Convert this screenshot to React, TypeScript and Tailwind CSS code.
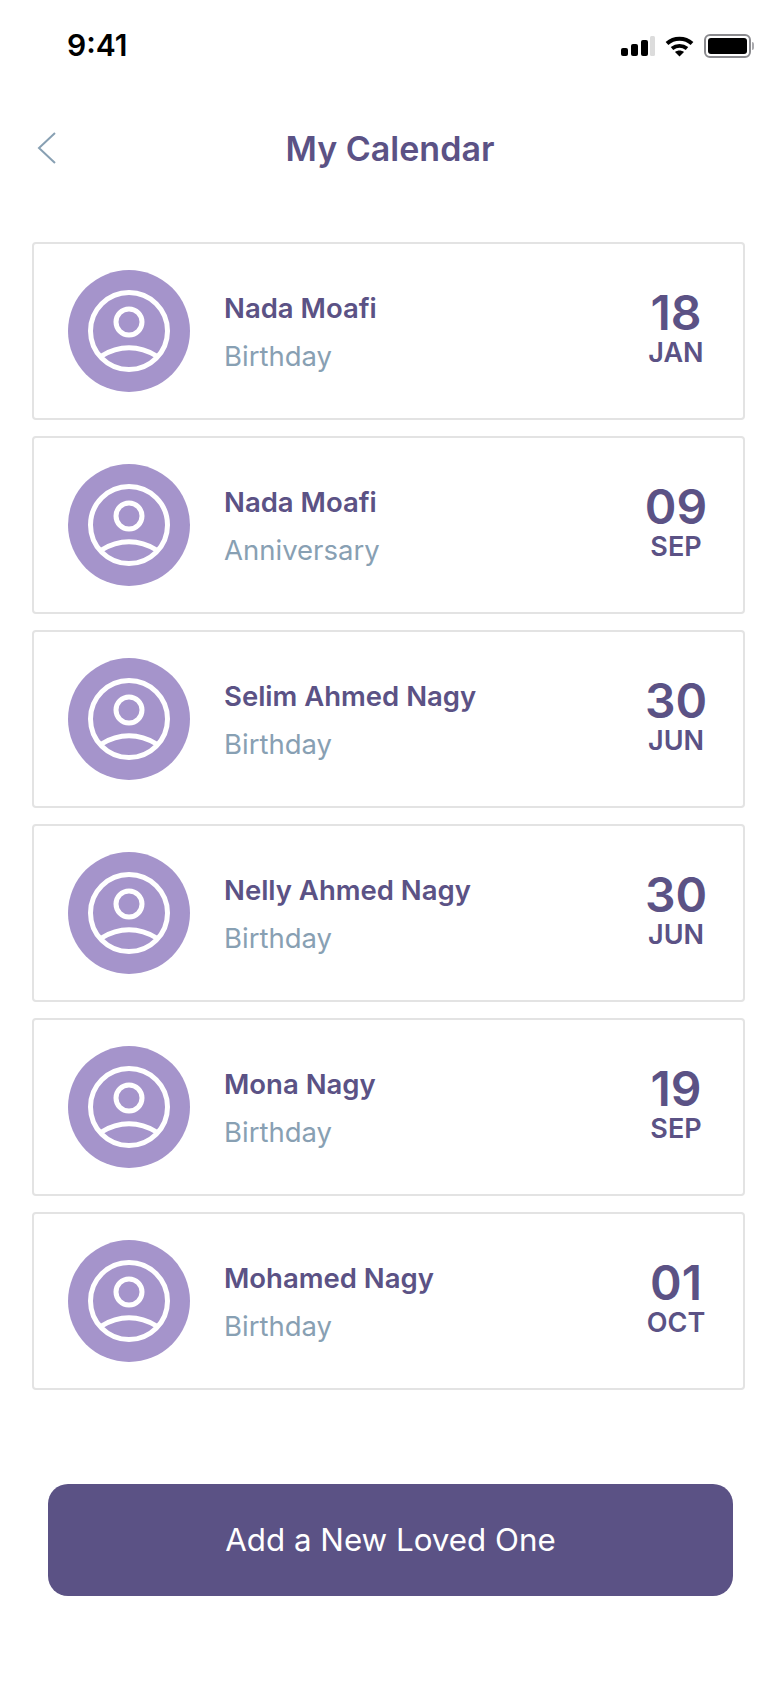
const events = [
  { name: 'Nada Moafi', kind: 'Birthday', day: '18', month: 'JAN' },
  { name: 'Nada Moafi', kind: 'Anniversary', day: '09', month: 'SEP' },
  { name: 'Selim Ahmed Nagy', kind: 'Birthday', day: '30', month: 'JUN' },
  { name: 'Nelly Ahmed Nagy', kind: 'Birthday', day: '30', month: 'JUN' },
  { name: 'Mona Nagy', kind: 'Birthday', day: '19', month: 'SEP' },
  { name: 'Mohamed Nagy', kind: 'Birthday', day: '01', month: 'OCT' },
];

const Avatar = () => {
  return (
    <div className="flex h-[122px] w-[122px] shrink-0 items-center justify-center rounded-full bg-[#a594cb]">
      <svg width="84" height="84" viewBox="0 0 84 84" fill="none" stroke="#fff" strokeWidth="5">
        <circle cx="42" cy="42" r="38.500" />
        <circle cx="42" cy="33" r="13" />
        <path d="M14.500 67 C32 56 52 56 69.500 67" />
      </svg>
    </div>
  );
};

const StatusBar = () => {
  return (
    <div className="flex h-[90px] items-start justify-between pl-[67px] pr-[26px] pt-[26px]">
      <span className="text-[30px] font-semibold leading-[38px] text-black">9:41</span>
      <div className="mt-[8px] flex items-center gap-[10px]">
        <svg width="34" height="20" viewBox="0 0 34 20" fill="#000">
          <rect x="0" y="12" width="7" height="8" rx="2" />
          <rect x="10" y="8" width="7" height="12" rx="2" />
          <rect x="20" y="4" width="7" height="16" rx="2" />
          <rect x="29" y="0" width="5" height="20" rx="1.500" fill="#dcdcdc" />
        </svg>
        <svg width="29" height="21" viewBox="0 0 29 21" fill="none" stroke="#000" strokeWidth="4">
          <path d="M2 7.500 C9 1 20 1 27 7.500" />
          <path d="M7 12.500 C11.500 9 17.500 9 22 12.500" />
          <path d="M14.500 20.500 L10 16 C12.500 14 16.500 14 19 16 Z" fill="#000" stroke="none" />
        </svg>
        <div className="flex items-center">
          <div className="flex h-[24px] w-[47px] rounded-[6px] border-2 border-[#8a8a8e] p-[2px]">
            <div className="flex-1 rounded-[3px] bg-black" />
          </div>
          <div className="ml-[1px] h-[8px] w-[2px] rounded-r-sm bg-[#a9a9ad]" />
        </div>
      </div>
    </div>
  );
};

const App = () => {
  return (
    <div className="flex h-[1688px] w-[780px] flex-col bg-white font-['Inter',sans-serif]">
      <StatusBar />

      <div className="relative mt-[28px] flex h-[60px] items-center justify-center">
        <svg className="absolute left-[37px] top-[14px]" width="20" height="32" viewBox="0 0 20 32" fill="none" stroke="#88a0b3" strokeWidth="2">
          <path d="M18 1 L2 16 L18 31" />
        </svg>
        <h1 className="text-[34px] font-semibold text-[#5b5285]">My Calendar</h1>
      </div>

      <ul className="ml-[32px] mt-[64px] flex w-[713px] flex-col gap-[16px]">
        {events.map((event, index) => (
          <li key={index} className="flex h-[178px] items-center rounded-[4px] border-2 border-[#e3e3e3] pl-[34px]">
            <Avatar />
            <div className="ml-[34px] mt-[2px] flex flex-1 flex-col gap-[12px]">
              <p className="text-[27.500px] font-semibold leading-[36px] text-[#5b5285]">{event.name}</p>
              <p className="text-[27.500px] leading-[36px] text-[#88a0b3]">{event.kind}</p>
            </div>
            <div className="mb-[8px] mr-[7px] flex w-[120px] flex-col items-center text-[#5b5285]">
              <p className="text-[48px] font-semibold leading-[52px]">{event.day}</p>
              <p className="text-[27px] font-semibold leading-[28px]">{event.month}</p>
            </div>
          </li>
        ))}
      </ul>

      <button className="ml-[48px] mt-[94px] flex h-[112px] w-[685px] items-center justify-center rounded-[20px] bg-[#5b5285] text-[31.300px] text-white">
        Add a New Loved One
      </button>
    </div>
  );
};

export default App;
